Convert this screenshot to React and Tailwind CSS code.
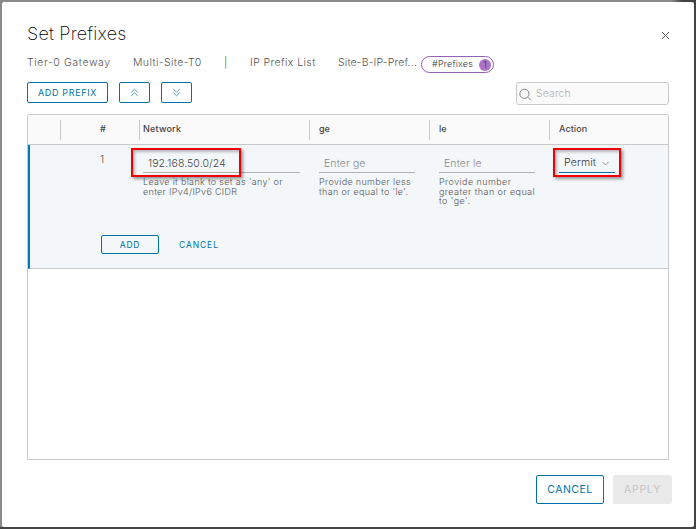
import React from "react";

function DoubleChevron({ down = false }) {
  return (
    <svg width="9" height="9" viewBox="0 0 9 9" fill="none" stroke="#3b97c0" strokeWidth="0.9" className={down ? "rotate-180" : ""}>
      <path d="M1.2 4.4 4.5 1.2 7.8 4.4M1.2 8 4.5 4.8 7.8 8" />
    </svg>
  );
}

function Header({ children, className = "pl-[9px]" }) {
  return (
    <div className={`mt-[5px] h-5 border-l border-[#c8c8c8] text-[9px] leading-[18px] font-medium text-[#454545] ${className}`}>
      {children}
    </div>
  );
}

function Field({ value, placeholder, spacing, children }) {
  return (
    <div>
      <input
        defaultValue={value}
        placeholder={placeholder}
        className={`mt-[9px] block h-[19px] w-full border-b border-[#b2b2b2] bg-transparent pl-[5px] text-[10.5px] leading-[18px] text-[#484848] outline-none placeholder:text-[#888] ${spacing}`}
      />
      <div className="mt-[4px] text-[9px] leading-[9.6px] whitespace-nowrap text-[#555]">{children}</div>
    </div>
  );
}

export default function App() {
  return (
    <div className="h-[529px] w-[696px] overflow-hidden bg-[linear-gradient(90deg,#8b898a_0,#8b898a_96.5%,#434343_98%)] font-['Inter','Liberation_Sans',sans-serif] font-light">
      <div className="h-full border-b-2 border-[#444] pt-[2px] pr-[2px] pl-[2px]">
        <main className="h-[525px] w-[692px] rounded-[2px] bg-white pt-[20px] pl-[25px]">
          <header className="flex h-[24px] w-[645px] items-start justify-between">
            <h1 className="text-[18px] leading-[24px] font-extralight tracking-[0.22px] whitespace-nowrap text-black">Set Prefixes</h1>
            <button aria-label="Close" className="mt-[9px] mr-[2px]">
              <svg width="9" height="9" viewBox="0 0 9 9" stroke="#555" strokeWidth="1"><path d="m1 1 7 7M8 1 1 8" /></svg>
            </button>
          </header>

          <nav className="mt-[8px] flex h-[18px] text-[10.5px] leading-[18px] whitespace-nowrap text-[#555]">
            <span className="w-[106px] tracking-[0.6px]">Tier-0 Gateway</span>
            <span className="w-[91px] tracking-[0.38px]">Multi-Site-T0</span>
            <span className="w-[26px]">|</span>
            <span className="w-[88px] tracking-[0.4px]">IP Prefix List</span>
            <span className="w-[83px] tracking-[0.15px]">Site-B-IP-Pref...</span>
            <span className="mt-[2px] flex h-[17px] w-[73px] items-center justify-between rounded-full border border-[#9460b8] pr-[2px] pl-[10px] text-[9px] leading-[13px] text-[#333]">
              <span className="-mt-[2px] tracking-[0.2px]">#Prefixes</span>
              <span className="h-[12px] w-[12px] rounded-full bg-[#ad73c8] text-center text-[9px] leading-[12px]">1</span>
            </span>
          </nav>

          <div className="mt-[10px] flex h-[23px] w-[642px]">
            <button className="h-[21px] w-[81px] rounded-[2px] border border-[#0072a3] text-[9px] leading-[19px] font-normal tracking-[0.65px] text-[#0072a3]">ADD PREFIX</button>
            <button className="ml-[11px] flex h-[21px] w-[31px] items-center justify-center rounded-[2px] border border-[#0072a3]"><DoubleChevron /></button>
            <button className="ml-[11px] flex h-[21px] w-[31px] items-center justify-center rounded-[2px] border border-[#0072a3]"><DoubleChevron down /></button>
            <label className="ml-auto flex h-[23px] w-[153px] rounded-[3px] border border-[#c9c9c9] bg-[#fafafa] pl-[2px]">
              <svg className="mt-[5px]" width="13" height="13" viewBox="0 0 13 13" fill="none" stroke="#858585"><circle cx="5.4" cy="5.8" r="4.6" /><path d="m8.8 9.2 3 3" /></svg>
              <input placeholder="Search" className="ml-[4px] w-[100px] text-[10.5px] leading-[20px] tracking-[0.1px] outline-none placeholder:text-[#b0b0b0]" />
            </label>
          </div>

          <section className="mt-[9px] h-[346px] w-[642px] rounded-t-[2px] border border-[#c9c9c9]">
            <div className="grid h-[30px] grid-cols-[32px_79px_170px_120px_120px_1fr] border-b border-[#c9c9c9] bg-[#fafafa]">
              <span />
              <Header className="pl-[39px]">#</Header>
              <Header className="pl-[3px] tracking-[0.2px]">Network</Header>
              <Header>ge</Header>
              <Header>le</Header>
              <Header className="pl-[9px] tracking-[0.1px]">Action</Header>
            </div>

            <div className="h-[124px] border-b border-l-2 border-b-[#c9c9c9] border-l-[#0079b8] bg-[#f3f7fa]">
              <div className="grid h-[90px] grid-cols-[109px_170px_120px_120px_1fr]">
                <span className="pt-[6px] pl-[70px] text-[10.5px] leading-[18px] text-[#555]">1</span>
                <div className="relative pr-[9px] pl-[4px]">
                  <Field value="192.168.50.0/24" spacing="tracking-[0.08px]"><span className="tracking-[0.32px]">Leave it blank to set as 'any' or<br />enter IPv4/IPv6 CIDR</span></Field>
                  <span className="pointer-events-none absolute top-[3px] -left-[8px] h-[29px] w-[110px] border-2 border-[#f00000] shadow-[2px_2px_3px_rgba(0,0,0,0.4),inset_2px_2px_3px_rgba(0,0,0,0.25)]" />
                </div>
                <div className="pr-[14px] pl-[10px]"><Field placeholder="Enter ge" spacing="tracking-[0.1px]"><span className="tracking-[0.33px]">Provide number less<br />than or equal to 'le'.</span></Field></div>
                <div className="pr-[14px] pl-[10px]"><Field placeholder="Enter le" spacing="tracking-[0.1px]"><span className="tracking-[0.42px]">Provide number<br />greater than or equal<br />to 'ge'.</span></Field></div>
                <div className="relative pl-[10px]">
                  <button className="mt-[8px] flex h-[20px] w-[56px] items-start border-b border-[#0072a3] pl-[5px] text-[10.5px] leading-[19px] tracking-[0.15px] text-[#333]">
                    Permit
                    <svg className="mt-[8px] ml-[6px]" width="7" height="5" viewBox="0 0 7 5" fill="none" stroke="#999"><path d="m.5 1 3 3 3-3" /></svg>
                  </button>
                  <span className="pointer-events-none absolute top-[3px] left-[4px] h-[29px] w-[68px] border-2 border-[#f00000] shadow-[2px_2px_3px_rgba(0,0,0,0.4),inset_2px_2px_3px_rgba(0,0,0,0.25)]" />
                </div>
              </div>
              <div className="flex pl-[71px] text-[8.5px] leading-[16px] font-normal text-[#0072a3]">
                <button className="h-[19px] w-[58px] rounded-[2px] border border-[#0072a3] pt-[1px] tracking-[0.8px]">ADD</button>
                <button className="ml-[20px] h-[19px] pt-[1px] tracking-[0.9px]">CANCEL</button>
              </div>
            </div>
          </section>

          <footer className="mt-[15px] flex gap-[9px] pl-[509px]">
            <button className="h-[29px] w-[68px] rounded-[2px] border border-[#0072a3] text-[10.5px] leading-[27px] font-normal tracking-[0.5px] text-[#0072a3]">CANCEL</button>
            <button disabled className="h-[29px] w-[59px] rounded-[2px] bg-[#eaeaea] text-[10.5px] leading-[29px] font-normal tracking-[0.75px] text-[#c5c5c5]">APPLY</button>
          </footer>
        </main>
      </div>
    </div>
  );
}
